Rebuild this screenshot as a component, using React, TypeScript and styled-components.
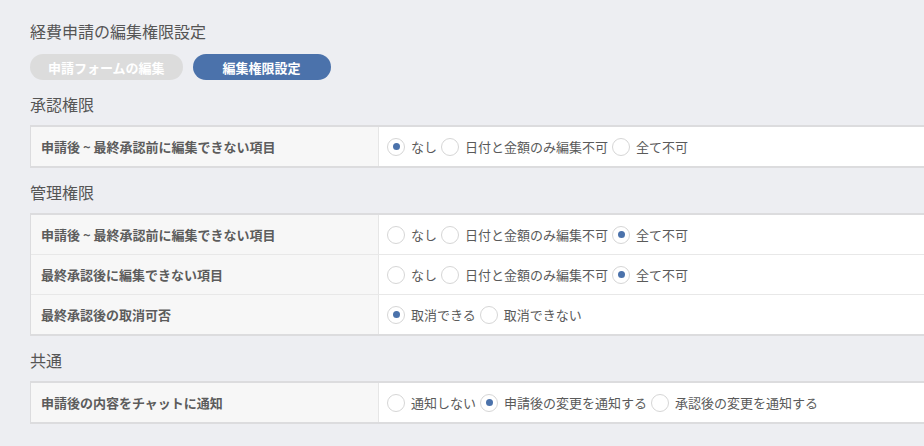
import styled, { createGlobalStyle } from "styled-components";

const GlobalStyle = createGlobalStyle`
  html, body {
    margin: 0;
    padding: 0;
    background: #edeef2;
    overflow: hidden;
  }
  body {
    font-family: "Noto Sans CJK JP", "Noto Sans", sans-serif;
    color: #555;
  }
`;

type Option = { label: string; checked?: boolean };
type Row = { label: string; options: Option[] };
type Section = { title: string; rows: Row[] };

const editOptions = (checked: number): Option[] =>
  ["なし", "日付と金額のみ編集不可", "全て不可"].map((label, i) => ({ label, checked: i === checked }));

const sections: Section[] = [
  {
    title: "承認権限",
    rows: [{ label: "申請後 ~ 最終承認前に編集できない項目", options: editOptions(0) }],
  },
  {
    title: "管理権限",
    rows: [
      { label: "申請後 ~ 最終承認前に編集できない項目", options: editOptions(2) },
      { label: "最終承認後に編集できない項目", options: editOptions(2) },
      {
        label: "最終承認後の取消可否",
        options: [{ label: "取消できる", checked: true }, { label: "取消できない" }],
      },
    ],
  },
  {
    title: "共通",
    rows: [
      {
        label: "申請後の内容をチャットに通知",
        options: [
          { label: "通知しない" },
          { label: "申請後の変更を通知する", checked: true },
          { label: "承認後の変更を通知する" },
        ],
      },
    ],
  },
];

const App = () => {
  return (
    <Page>
      <GlobalStyle />
      <Title>経費申請の編集権限設定</Title>
      <Tabs>
        <Pill>申請フォームの編集</Pill>
        <Pill $active>編集権限設定</Pill>
      </Tabs>
      {sections.map((section) => (
        <div key={section.title}>
          <SectionTitle>{section.title}</SectionTitle>
          <Table>
            {section.rows.map((row, r) => (
              <TableRow key={r}>
                <LabelCell>{row.label}</LabelCell>
                <ValueCell>
                  {row.options.map((opt) => (
                    <RadioLabel key={opt.label}>
                      <RadioCircle $checked={opt.checked} />
                      {opt.label}
                    </RadioLabel>
                  ))}
                </ValueCell>
              </TableRow>
            ))}
          </Table>
        </div>
      ))}
    </Page>
  );
};

const Page = styled.div`
  padding: 19px 0 0 30px;
`;

const Title = styled.h1`
  margin: 0;
  font-size: 16px;
  line-height: 24px;
  font-weight: 400;
  color: #555;
`;

const Tabs = styled.div`
  display: flex;
  gap: 10px;
  margin-top: 11px;
`;

const Pill = styled.button<{ $active?: boolean }>`
  height: 26px;
  min-width: 138px;
  padding: 0 18px;
  border: none;
  border-radius: 13px;
  background: ${(p) => (p.$active ? "#4b72ab" : "#dcdcdc")};
  color: #fff;
  font-family: inherit;
  font-size: 13px;
  font-weight: 700;
  cursor: pointer;
`;

const SectionTitle = styled.h2`
  margin: 12px 0 9px;
  font-size: 16px;
  line-height: 24px;
  font-weight: 400;
  color: #555;
`;

const Table = styled.div`
  border-top: 2px solid #dcdcde;
  border-bottom: 2px solid #dcdcde;
  border-left: 1px solid #dcdcde;
  background: #fff;
  margin-bottom: 1px;
`;

const TableRow = styled.div`
  display: flex;
  height: 39px;
  & + & {
    border-top: 1px solid #e8e8e8;
  }
`;

const LabelCell = styled.div`
  width: 337px;
  flex-shrink: 0;
  display: flex;
  align-items: center;
  padding-left: 10px;
  background: #f7f7f7;
  border-right: 1px solid #e6e6e6;
  font-size: 13px;
  font-weight: 700;
  color: #5c5c5c;
`;

const ValueCell = styled.div`
  display: flex;
  align-items: center;
  gap: 4px;
  padding-left: 8px;
  font-size: 13px;
  color: #5a5a5a;
  white-space: nowrap;
`;

const RadioLabel = styled.label`
  display: flex;
  align-items: center;
  gap: 6px;
  cursor: pointer;
`;

const RadioCircle = styled.span<{ $checked?: boolean }>`
  width: 16px;
  height: 16px;
  border-radius: 50%;
  border: 1px solid #d6d6d6;
  background: #fff;
  display: flex;
  align-items: center;
  justify-content: center;
  &::after {
    content: "";
    display: ${(p) => (p.$checked ? "block" : "none")};
    width: 7px;
    height: 7px;
    border-radius: 50%;
    background: #4b72ab;
  }
`;

export default App;
